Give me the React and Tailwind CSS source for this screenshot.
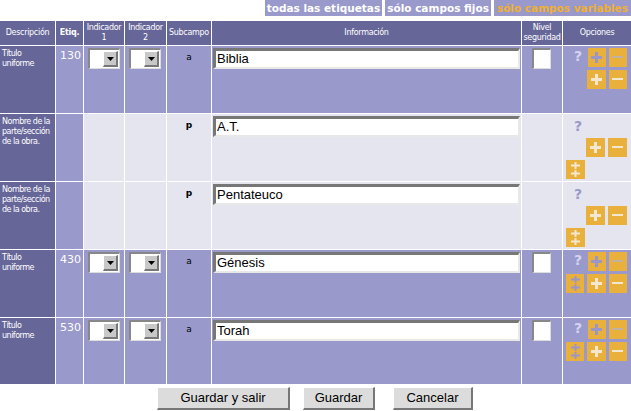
import React from 'react'

const ROWS = [
  { desc: 'Título uniforme', tag: '130', sub: 'a', value: 'Biblia', kind: 'field', first: true },
  { desc: 'Nombre de la parte/sección de la obra.', sub: 'p', value: 'A.T.', kind: 'sub' },
  { desc: 'Nombre de la parte/sección de la obra.', sub: 'p', value: 'Pentateuco', kind: 'sub' },
  { desc: 'Título uniforme', tag: '430', sub: 'a', value: 'Génesis', kind: 'field' },
  { desc: 'Título uniforme', tag: '530', sub: 'a', value: 'Torah', kind: 'field' },
]

const small = "font-['DejaVu_Sans',sans-serif] text-[8px] leading-[10px]"

function Plus({ color }) {
  return (
    <svg width="11" height="11" viewBox="0 0 11 11">
      <rect x="0" y="4" width="11" height="3" fill={color} />
      <rect x="4" y="0" width="3" height="11" fill={color} />
    </svg>
  )
}

function Minus({ color }) {
  return (
    <svg width="11" height="11" viewBox="0 0 11 11">
      <rect x="0" y="4" width="11" height="2" fill={color} />
    </svg>
  )
}

function DoublePlus({ color }) {
  return (
    <svg width="11" height="15" viewBox="0 0 11 15">
      <rect x="1" y="2.5" width="9" height="2" fill={color} />
      <rect x="4.5" y="0" width="2" height="7" fill={color} />
      <rect x="1" y="10.5" width="9" height="2" fill={color} />
      <rect x="4.5" y="8" width="2" height="7" fill={color} />
    </svg>
  )
}

function Btn({ children }) {
  return <div className="w-[19px] h-[19px] bg-[#e9b13c] flex items-center justify-center">{children}</div>
}

function Select() {
  return (
    <div className="mt-[2px] ml-[4px] w-[32px] h-[21px] bg-white border-t-2 border-l-2 border-t-[#888] border-l-[#888] border-b border-r border-b-[#ddd] border-r-[#ddd] flex justify-end items-stretch p-[1px]">
      <div className="w-[15px] bg-[#c8c8c8] border-t border-l border-white border-b-2 border-r-2 border-b-[#777] border-r-[#777] flex items-center justify-center">
        <svg width="7" height="4" viewBox="0 0 7 4"><path d="M0 0h7L3.5 4z" fill="#000" /></svg>
      </div>
    </div>
  )
}

function TextInput({ value }) {
  return (
    <div className="mt-[2px] mx-[1px] h-[21px] bg-white border-t-[3px] border-l-[3px] border-t-[#777] border-l-[#777] border-b-[2px] border-r-[2px] border-b-[#e8e8e8] border-r-[#e8e8e8] flex items-center pl-[1px] font-['Liberation_Sans',sans-serif] text-[13px] text-black">
      {value}
    </div>
  )
}

function Options({ row, bgDark }) {
  const q = bgDark ? 'text-[#d4d4ee]' : 'text-[#9999cc]'
  const light = '#f3e8cf'
  const dim = '#9a96c8'
  const dim2 = '#c2b0a0'
  if (row.kind === 'sub') {
    return (
      <div className="pt-[2px] pl-[3px] pr-[4px] flex flex-col">
        <div className={`h-[22px] pl-[8px] pt-[2px] text-[14px] font-bold leading-[16px] font-['DejaVu_Sans',sans-serif] ${q}`}>?</div>
        <div className="flex justify-end gap-[3px]">
          <Btn><Plus color={light} /></Btn>
          <Btn><Minus color={light} /></Btn>
        </div>
        <div className="mt-[3px]">
          <Btn><DoublePlus color={light} /></Btn>
        </div>
      </div>
    )
  }
  return (
    <div className="pt-[2px] pl-[3px] pr-[4px] flex flex-col gap-[3px]">
      <div className="flex items-start gap-[3px]">
        <div className={`w-[19px] h-[19px] pl-[8px] text-[14px] font-bold leading-[16px] font-['DejaVu_Sans',sans-serif] ${q}`}>?</div>
        <Btn><Plus color={dim} /></Btn>
        <Btn><Minus color={dim2} /></Btn>
      </div>
      <div className="flex gap-[3px]">
        {row.first ? <div className="w-[19px]" /> : <Btn><DoublePlus color={dim} /></Btn>}
        <Btn><Plus color={light} /></Btn>
        <Btn><Minus color={light} /></Btn>
      </div>
    </div>
  )
}

function Row({ row }) {
  const sub = row.kind === 'sub'
  const bg = sub ? 'bg-[#e5e5ef]' : 'bg-[#9999cc]'
  return (
    <>
      <div className={`bg-[#666699] text-white pl-[2px] pt-[3px] tracking-[-0.5px] ${small}`}>{row.desc}</div>
      <div className="bg-[#9999cc] text-white pl-[4px] pt-[3px] font-['DejaVu_Sans',sans-serif] text-[11px] leading-[13px]">{row.tag}</div>
      <div className={bg}>{!sub && <Select />}</div>
      <div className={bg}>{!sub && <Select />}</div>
      <div className={`${bg} text-center pt-[5px] font-['DejaVu_Sans',sans-serif] text-[9px] ${sub ? 'font-bold' : ''} text-black`}>{row.sub}</div>
      <div className={bg}><TextInput value={row.value} /></div>
      <div className={bg}>
        {!sub && (
          <div className="mt-[2px] ml-[10px] w-[19px] h-[21px] bg-white border-t-2 border-l-2 border-t-[#888] border-l-[#888] border-b border-r border-b-[#ddd] border-r-[#ddd]" />
        )}
      </div>
      <div className={bg}><Options row={row} bgDark={!sub} /></div>
    </>
  )
}

const HEADS = [
  ['Descripción'], ['Etiq.'], ['Indicador', '1'], ['Indicador', '2'], ['Subcampo'],
  ['Información'], ['Nivel', 'seguridad'], ['Opciones'],
]

export default function App() {
  return (
    <div className="w-[631px] h-[411px] bg-white overflow-hidden">
      <div className="h-[17px] flex justify-end gap-[3px] font-['DejaVu_Sans',sans-serif] text-[10.5px] font-bold leading-[16px]">
        <div className="bg-[#9999cc] text-white px-[2px] h-[16px]">todas las etiquetas</div>
        <div className="bg-[#9999cc] text-white px-[2px] h-[16px]">sólo campos fijos</div>
        <div className="bg-[#9999cc] text-[#f0b030] px-[3px] h-[16px]">sólo campos variables</div>
      </div>
      <div className="mt-[4px] grid grid-cols-[55px_27px_40px_41px_44px_309px_40px_68px] grid-rows-[24px_67px_67px_67px_67px_66px] gap-[1px] bg-white">
        {HEADS.map((h, i) => (
          <div key={i} className={`bg-[#666699] text-white flex flex-col items-center justify-center text-center whitespace-nowrap tracking-[-0.3px] ${small} ${i === 1 ? 'font-bold' : ''}`}>
            {h.map(line => <span key={line}>{line}</span>)}
          </div>
        ))}
        {ROWS.map((r, i) => <Row key={i} row={r} />)}
      </div>
      <div className="mt-[3px] flex font-['Liberation_Sans',sans-serif] text-[13px] text-black">
        <button className="ml-[157px] w-[133px] h-[23px] bg-[#dcdcdc] border-t border-l border-t-white border-l-white border-b-2 border-r-2 border-b-[#777] border-r-[#777]">Guardar y salir</button>
        <button className="ml-[13px] w-[72px] h-[23px] bg-[#dcdcdc] border-t border-l border-t-white border-l-white border-b-2 border-r-2 border-b-[#777] border-r-[#777]">Guardar</button>
        <button className="ml-[18px] w-[80px] h-[23px] bg-[#dcdcdc] border-t border-l border-t-white border-l-white border-b-2 border-r-2 border-b-[#777] border-r-[#777]">Cancelar</button>
      </div>
    </div>
  )
}
